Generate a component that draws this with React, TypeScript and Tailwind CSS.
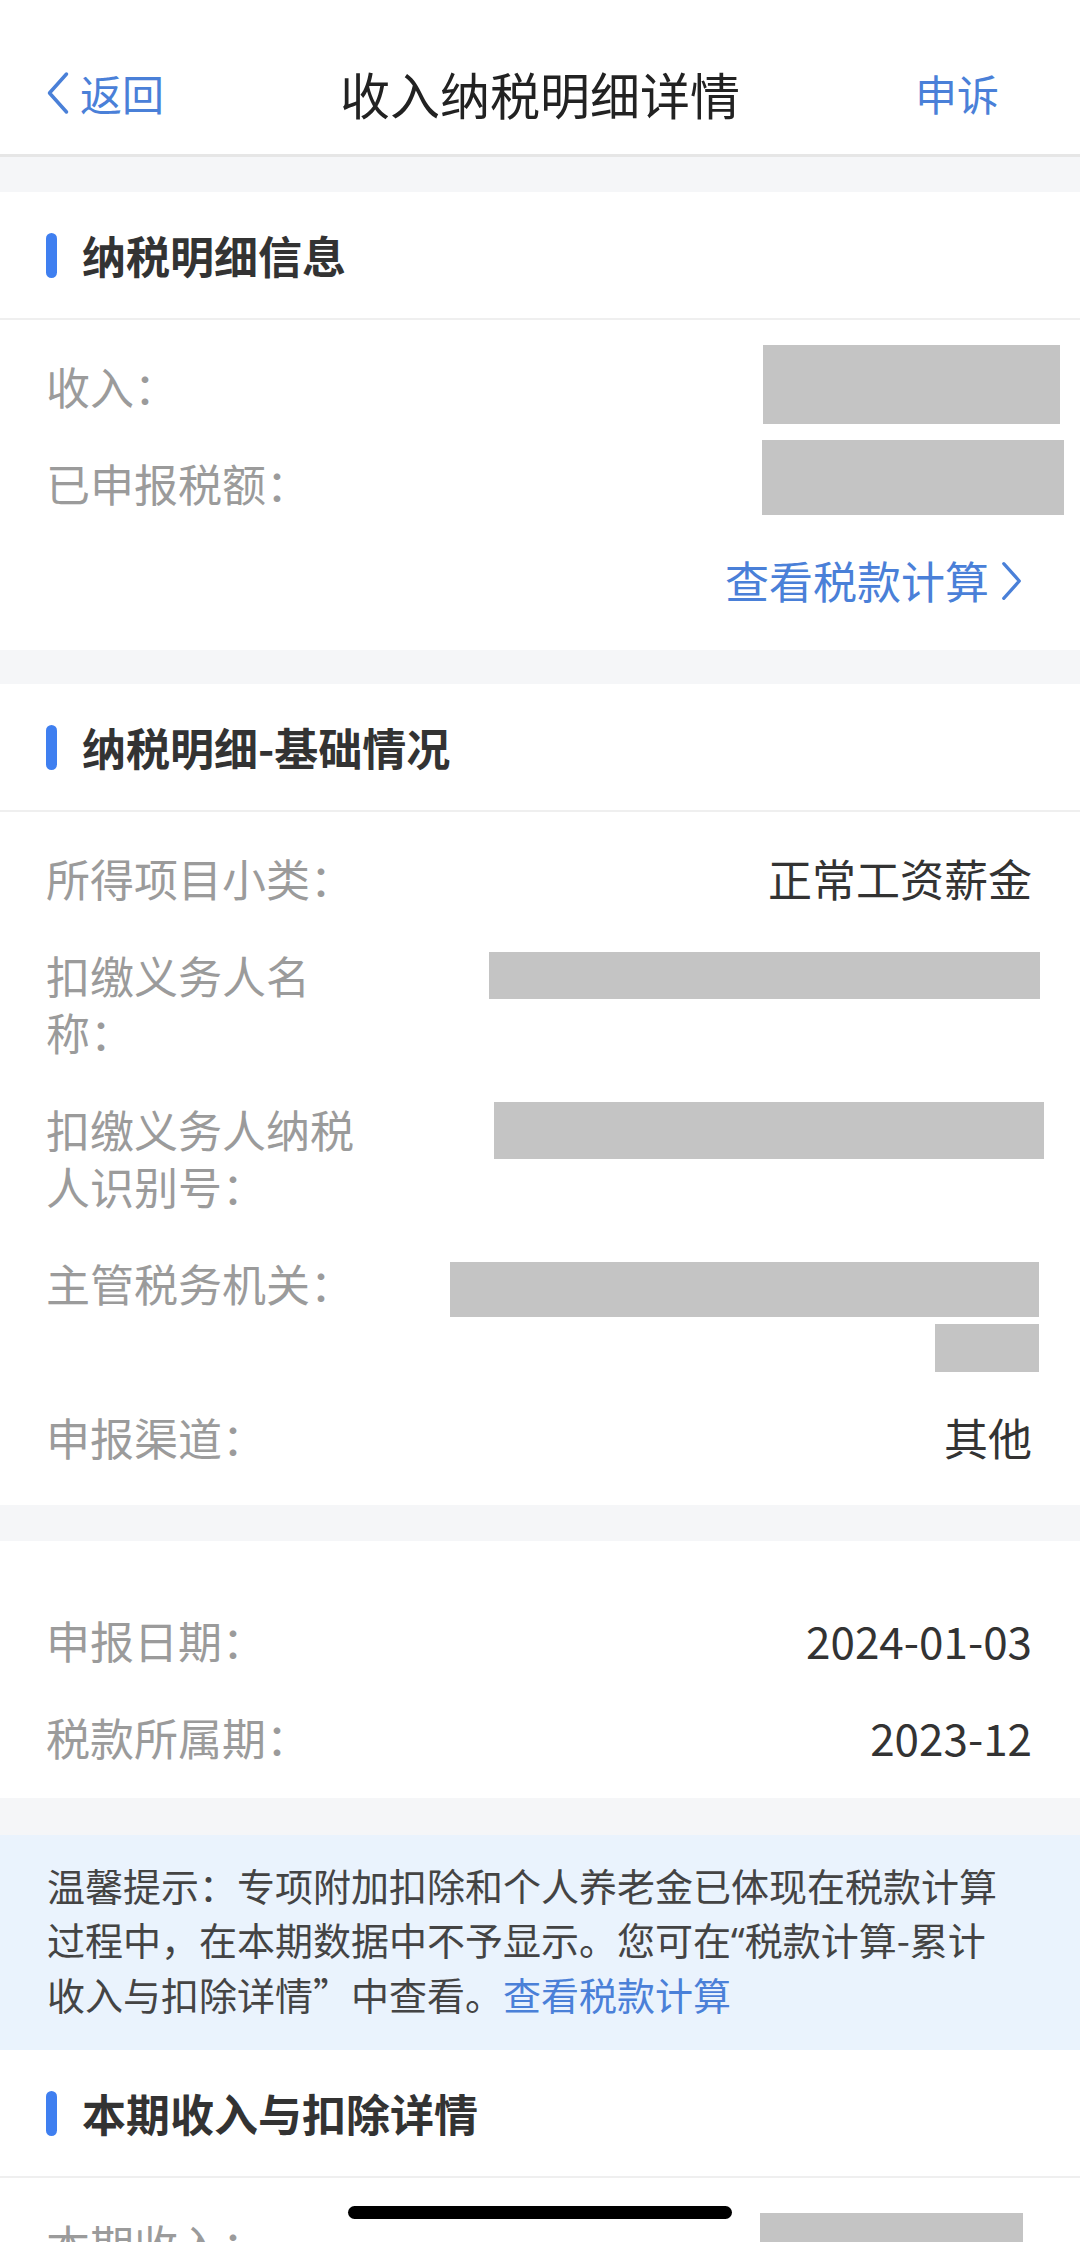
import React from "react";

const Chevron = ({ className, left }: { className?: string; left?: boolean }) => (
  <svg
    viewBox="0 0 24 44"
    className={className}
    fill="none"
    stroke="currentColor"
    strokeWidth={3.5}
    strokeLinecap="round"
    strokeLinejoin="round"
  >
    {left ? <polyline points="21,3 4,22 21,41" /> : <polyline points="3,3 20,22 3,41" />}
  </svg>
);

// grey block that hides personal data
const Redact = ({ className }: { className: string }) => (
  <div className={"bg-[#c4c4c4] shrink-0 " + className} />
);

const Gap = ({ className }: { className: string }) => (
  <div className={"bg-[#f5f6f8] " + className} />
);

const SectionHeader = ({ title }: { title: string }) => (
  <div className="flex items-center h-[128px] pl-[46px] border-b-2 border-[#efefef]">
    <span className="w-[11px] h-[45px] rounded-full bg-[#3f7ff0]" />
    <h2 className="ml-[25px] text-[44px] font-bold text-[#333] leading-none">{title}</h2>
  </div>
);

const Row = ({ label, children }: { label: string; children?: React.ReactNode }) => (
  <div className="flex items-start py-[20px] leading-[57px]">
    <div className="w-[320px] shrink-0 text-[#9b9b9b]">{label}</div>
    <div className="flex-1 flex flex-col items-end text-[#333]">{children}</div>
  </div>
);

export default function App() {
  return (
    <div className="relative h-[2242px] overflow-hidden bg-white font-['Noto_Sans_CJK_SC','Noto_Sans',sans-serif]">
      {/* Nav bar */}
      <div className="grid grid-cols-[minmax(0,1fr)_auto_minmax(0,1fr)] items-center h-[157px] pt-[32px] border-b-[3px] border-[#e6e6e6]">
        <div className="flex items-center pl-[45px] text-[#4a80d8]">
          <Chevron left className="w-[25px] h-[44px]" />
          <span className="ml-[10px] text-[42px] leading-none">返回</span>
        </div>
        <h1 className="text-[50px] leading-none text-[#222]">收入纳税明细详情</h1>
        <div className="flex justify-end pr-[81px] text-[42px] leading-none text-[#4a80d8]">
          申诉
        </div>
      </div>

      <Gap className="h-[35px]" />

      {/* 纳税明细信息 */}
      <SectionHeader title="纳税明细信息" />
      <div className="pl-[46px] pr-[48px] pt-[18px] pb-[21px] text-[44px]">
        <Row label="收入：">
          <Redact className="w-[297px] h-[79px] -mt-[13px] -mb-[9px] -mr-[28px]" />
        </Row>
        <Row label="已申报税额：">
          <Redact className="w-[302px] h-[75px] -mt-[15px] -mb-[3px] -mr-[32px]" />
        </Row>
        <div className="flex justify-end items-center py-[20px] leading-[57px] text-[#4a80d8]">
          查看税款计算
          <Chevron className="w-[22px] h-[42px] ml-[12px] mr-[9px]" />
        </div>
      </div>

      <Gap className="h-[34px]" />

      {/* 纳税明细-基础情况 */}
      <SectionHeader title="纳税明细-基础情况" />
      <div className="pl-[46px] pr-[48px] pt-[18px] pb-[19px] text-[44px]">
        <Row label="所得项目小类：">正常工资薪金</Row>
        <Row label="扣缴义务人名称：">
          <Redact className="w-[551px] h-[47px] mt-[5px] -mr-[8px]" />
        </Row>
        <Row label="扣缴义务人纳税人识别号：">
          <Redact className="w-[550px] h-[57px] mt-[1px] -mr-[12px]" />
        </Row>
        <Row label="主管税务机关：">
          <Redact className="w-[589px] h-[55px] mt-[7px] -mr-[7px]" />
          <Redact className="w-[104px] h-[48px] mt-[7px] -mb-[3px] -mr-[7px]" />
        </Row>
        <Row label="申报渠道：">其他</Row>
      </div>

      <Gap className="h-[36px]" />

      {/* 日期 */}
      <div className="pl-[46px] pr-[48px] pt-[51px] pb-[12px] text-[44px]">
        <Row label="申报日期：">2024-01-03</Row>
        <Row label="税款所属期：">2023-12</Row>
      </div>

      <Gap className="h-[37px]" />

      {/* 温馨提示 */}
      <div className="bg-[#eaf3fd] pl-[47px] pr-[30px] pt-[23px] pb-[29px] text-[38px] leading-[54px] text-[#444]">
        温馨提示：专项附加扣除和个人养老金已体现在税款计算
        <br />
        过程中，在本期数据中不予显示。您可在<span className="font-['Noto_Sans',sans-serif]">“</span>税款计算-累计
        <br />
        收入与扣除详情”中查看。<span className="text-[#4a80d8]">查看税款计算</span>
      </div>

      {/* 本期收入与扣除详情 */}
      <SectionHeader title="本期收入与扣除详情" />
      <div className="pl-[46px] pr-[48px] pt-[18px] text-[44px]">
        <Row label="本期收入：">
          <Redact className="w-[263px] h-[60px] -mt-[3px] mr-[9px]" />
        </Row>
      </div>

      {/* home indicator */}
      <div className="absolute left-1/2 -translate-x-1/2 top-[2206px] w-[384px] h-[13px] rounded-full bg-black" />
    </div>
  );
}
